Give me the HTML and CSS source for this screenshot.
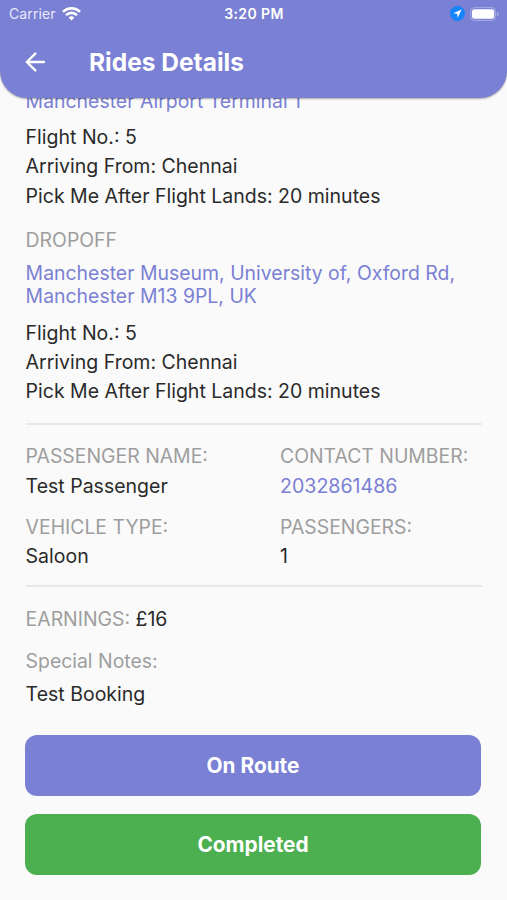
FILE: index.html
```html
<!DOCTYPE html>
<html lang="en">
<head>
<meta charset="utf-8">
<title>Rides Details</title>
<link rel="stylesheet" href="styles.css">
</head>
<body>
<header class="header">
  <div class="status">
    <div class="carrier"><span>Carrier</span>
      <svg width="19" height="14" viewBox="0 0 19 14" fill="none" stroke="#fff" stroke-width="2.6"><path d="M1 4.9a12 12 0 0 1 17 0M4 8.1a7.8 7.8 0 0 1 11 0"/><path d="M9.5 13.6 6.6 10.6a4.2 4.2 0 0 1 5.8 0z" fill="#fff" stroke="none"/></svg>
    </div>
    <div class="time">3:20 PM</div>
    <div class="indicators">
      <svg width="15" height="15" viewBox="0 0 14 14"><circle cx="7" cy="7" r="7" fill="#1684fb"/><path d="M10.8 3.2 3 6.8l3.7.5.5 3.7z" fill="#fff"/></svg>
      <svg width="29" height="14" viewBox="0 0 29 14"><rect x=".6" y=".6" width="25" height="12.8" rx="3.8" fill="none" stroke="#a9ade4"/><rect x="2" y="2.2" width="22.2" height="9.6" rx="2.3" fill="#fff"/><path d="M27 4.7q1.7.7 1.7 2.3T27 9.3z" fill="#a9ade4"/></svg>
    </div>
  </div>
  <div class="titlebar">
    <svg class="back" width="20" height="20" viewBox="0 0 20 20" fill="none" stroke="#fff" stroke-width="2.4" stroke-linecap="round" stroke-linejoin="round"><path d="M19 10H2M10.3 1.6 1.8 10l8.5 8.4"/></svg>
    <h1>Rides Details</h1>
  </div>
</header>
<main>
  <section class="stop pickup">
    <p class="address">Manchester Airport Terminal 1</p>
    <p class="line">Flight No.: 5</p>
    <p class="line">Arriving From: Chennai</p>
    <p class="line">Pick Me After Flight Lands: 20 minutes</p>
  </section>
  <section class="stop dropoff">
    <h2 class="label">DROPOFF</h2>
    <p class="address">Manchester Museum, University of, Oxford Rd,<br>Manchester M13 9PL, UK</p>
    <p class="line">Flight No.: 5</p>
    <p class="line">Arriving From: Chennai</p>
    <p class="line">Pick Me After Flight Lands: 20 minutes</p>
  </section>
  <section class="details">
    <div><h2 class="label">PASSENGER NAME:</h2><p class="line">Test Passenger</p></div>
    <div><h2 class="label">CONTACT NUMBER:</h2><p class="line phone">2032861486</p></div>
    <div><h2 class="label">VEHICLE TYPE:</h2><p class="line">Saloon</p></div>
    <div><h2 class="label">PASSENGERS:</h2><p class="line">1</p></div>
  </section>
  <section class="summary">
    <p class="line"><span class="label">EARNINGS:</span> £16</p>
    <h2 class="label notes">Special Notes:</h2>
    <p class="line">Test Booking</p>
  </section>
  <div class="actions">
    <button class="route">On Route</button>
    <button class="completed">Completed</button>
  </div>
</main>
</body>
</html>
```
FILE: styles.css
```css
* { box-sizing: border-box; }
body { margin: 0; height: 900px; overflow: hidden; background: #fafafa; color: #2a2a2a; font: 19.5px/29px Inter, "Liberation Sans", sans-serif; }
h1, h2, p { margin: 0; }
.header { position: relative; z-index: 1; height: 98px; background: #7a80d4; color: #fff; border-radius: 0 0 27px 27px; box-shadow: 0 1px 2px #0005; }
.status { display: grid; grid-template-columns: 1fr auto 1fr; align-items: center; height: 27px; padding: 0 8px 0 9px; font-size: 14px; line-height: 20px; }
.carrier { display: flex; align-items: center; gap: 6px; color: #e9eafa; letter-spacing: .1px; }
.time { font-weight: 600; letter-spacing: .4px; }
.indicators { display: flex; align-items: center; justify-content: flex-end; gap: 5px; }
.titlebar { display: flex; align-items: center; height: 70px; padding-left: 25px; gap: 44px; }
h1 { font-size: 24.5px; font-weight: 700; line-height: 30px; }
main { padding: 0 25px 0 25.6px; }
.pickup { margin-top: -8.3px; }
.address { color: #7a80d4; font-size: 19.4px; line-height: 23.4px; margin-bottom: 10px; white-space: nowrap; letter-spacing: .02px; }
.line { line-height: 29.3px; white-space: nowrap; }
.label { color: #9e9e9e; font-size: 19.4px; font-weight: 400; line-height: 29.3px; }
.dropoff { padding-top: 14.6px; }
.dropoff .label { margin-bottom: 7px; }
.details { display: grid; grid-template-columns: 254.4px 1fr; row-gap: 12px; margin-top: 16.7px; padding: 17px 0 14px; border: solid #e8e8e8; border-width: 2px 0; }
.phone { color: #7a80d4; font-size: 19.6px; }
.summary { padding-top: 17.3px; }
.notes { margin: 13px 0 4px; }
.actions { display: grid; gap: 18px; margin: 25.7px 1px 0 -.6px; }
button { height: 61px; border: 0; border-radius: 12px; color: #fff; font: 700 20.8px Inter, "Liberation Sans", sans-serif; }
.route { background: #7a80d4; }
.completed { background: #4caf50; }
```
